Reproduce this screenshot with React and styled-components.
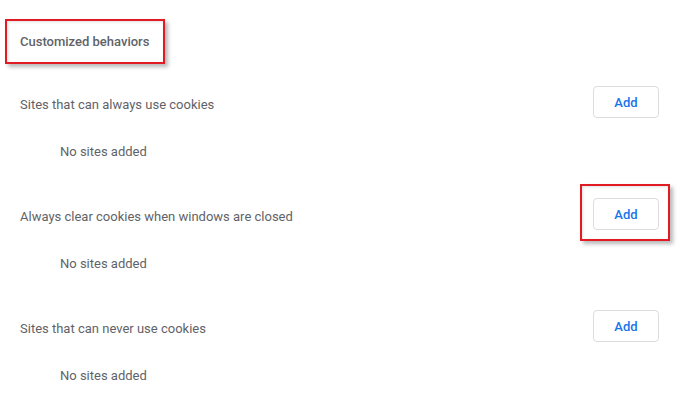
import React from "react";
import styled, { createGlobalStyle } from "styled-components";

const GlobalStyle = createGlobalStyle`
  html, body {
    margin: 0;
    padding: 0;
    background: #ffffff;
  }
  body {
    font-family: Roboto, "Liberation Sans", Arial, sans-serif;
    -webkit-font-smoothing: antialiased;
  }
`;

const Page = styled.div`
  position: relative;
  width: 679px;
  height: 399px;
  padding: 0 20px;
  box-sizing: border-box;
  overflow: hidden;
`;

const Header = styled.div`
  display: flex;
  align-items: center;
  height: 78px;
  padding-top: 4px;
  box-sizing: border-box;
  font-size: 13px;
  font-weight: 500;
  color: #5f6368;
`;

const Highlight = styled.div`
  position: absolute;
  border: 2px solid #e01b24;
  box-shadow: 3px 3px 4px rgba(0, 0, 0, 0.28),
    inset 1px 1px 3px rgba(0, 0, 0, 0.12);
  pointer-events: none;
  box-sizing: border-box;
`;

const Section = styled.section`
  & + & {
    margin-top: 16px;
  }
`;

const Row = styled.div`
  position: relative;
  display: flex;
  align-items: center;
  justify-content: space-between;
  min-height: 48px;
  font-size: 13px;
  color: #5f6368;
`;

const Label = styled.span`
  padding-top: 5px;
`;

const Empty = styled.div`
  display: flex;
  align-items: center;
  min-height: 48px;
  padding: 2px 0 0 40px;
  box-sizing: border-box;
  font-size: 13px;
  color: #5f6368;
`;

const ButtonWrap = styled.div`
  position: relative;
  display: flex;
`;

const AddButton = styled.button`
  width: 66px;
  height: 32px;
  padding: 0;
  border: 1px solid #dadce0;
  border-radius: 4px;
  background: #fff;
  color: #1a73e8;
  font-family: inherit;
  font-size: 13px;
  font-weight: 500;
  cursor: pointer;
`;

const sections = [
  { label: "Sites that can always use cookies" },
  { label: "Always clear cookies when windows are closed", marked: true },
  { label: "Sites that can never use cookies" },
];

export default function App() {
  return (
    <>
      <GlobalStyle />
      <Page>
        <Header>Customized behaviors</Header>
        <Highlight style={{ left: 5, top: 19, width: 160, height: 45 }} />
        {sections.map((s) => (
          <Section key={s.label}>
            <Row>
              <Label>{s.label}</Label>
              <ButtonWrap>
                <AddButton>Add</AddButton>
                {s.marked && (
                  <Highlight
                    style={{ left: -13, top: -14, right: -11, bottom: -11 }}
                  />
                )}
              </ButtonWrap>
            </Row>
            <Empty>No sites added</Empty>
          </Section>
        ))}
      </Page>
    </>
  );
}
